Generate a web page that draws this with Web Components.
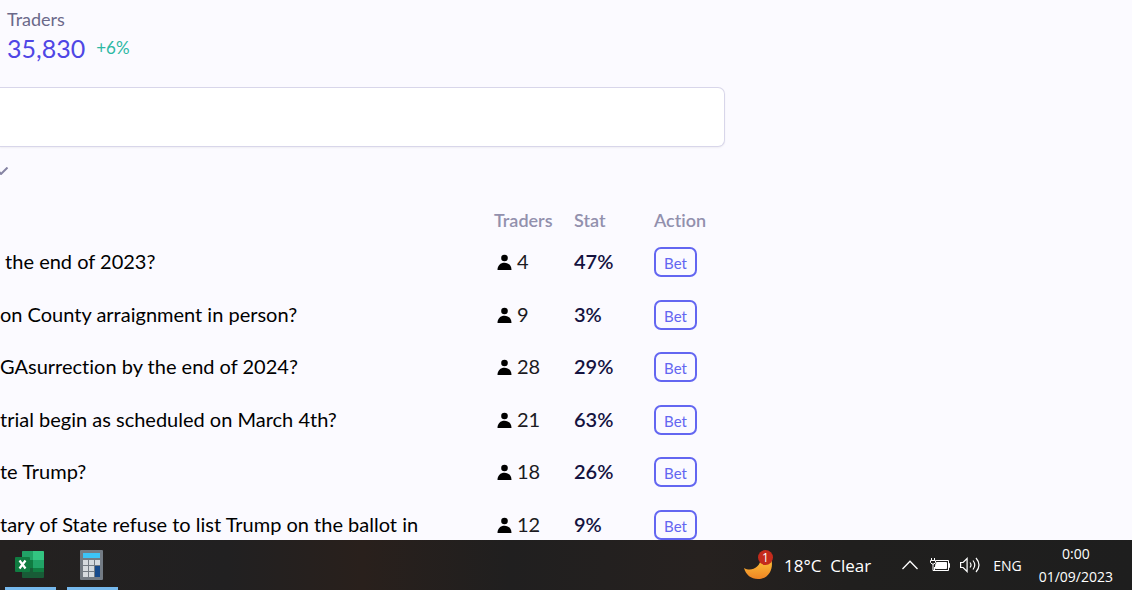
<!DOCTYPE html>
<html lang="en">
<head>
<meta charset="utf-8">
<title>Markets</title>
<style>
  body {
    margin: 0;
    height: 100vh;
    display: flex;
    flex-direction: column;
    background: #fbfaff;
    font-family: Lato, sans-serif;
    font-variant-ligatures: none;
  }
</style>
</head>
<body>
<market-page>
  <stat-tile label="Traders" value="35,830" change="+6%"></stat-tile>
  <search-box></search-box>
  <filter-toggle></filter-toggle>
  <market-table></market-table>
</market-page>
<task-bar>
  <task-app>
    <svg width="30" height="30" viewBox="0 0 30 30">
      <rect x="7" y="1" width="22" height="27" rx="1" fill="#185c37"/>
      <path d="M7 2a1 1 0 0 1 1-1h10v9H7z" fill="#21a366"/>
      <path d="M18 1h10a1 1 0 0 1 1 1v8H18z" fill="#33c481"/>
      <path d="M7 10h11v8H7z" fill="#107c41"/>
      <path d="M18 10h11v8H18z" fill="#21a366"/>
      <path d="M18 18h11v4H18z" fill="#107c41"/>
      <rect x="0" y="7" width="15" height="15" rx="1" fill="#107c41"/>
      <path d="M4.500 10.500l6 8M10.500 10.500l-6 8" stroke="#fff" stroke-width="2.200"/>
    </svg>
  </task-app>
  <task-app>
    <svg width="24" height="30" viewBox="0 0 24 30">
      <rect width="23" height="30" rx="1" fill="#737b84"/>
      <rect x="3" y="3" width="17" height="5" fill="#3cc4f7"/>
      <g fill="#d5dadf">
        <path d="M3 10h5v5H3zM9 10h5v5H9zM15 10h5v5h-5zM3 16h5v5H3zM9 16h5v5H9zM3 22h5v5H3zM9 22h5v5H9z"/>
      </g>
      <path d="M15 16h5v11h-5z" fill="#164a8c"/>
    </svg>
  </task-app>
  <weather-info slot="tray" count="1">18°C&nbsp; Clear</weather-info>
  <tray-icons slot="tray"></tray-icons>
  <tray-clock slot="tray" time="0:00" date="01/09/2023"></tray-clock>
</task-bar>

<script>
class MarketPage extends HTMLElement {
  constructor() {
    super();
    this.attachShadow({ mode: "open" }).innerHTML = `
      <style>
        :host {
          display: block;
          flex: 1;
          min-height: 0;
          overflow: hidden;
        }
        main {
          max-width: 725px;
          padding-top: 8px;
        }
      </style>
      <main><slot></slot></main>
    `;
  }
}
customElements.define("market-page", MarketPage);

class StatTile extends HTMLElement {
  connectedCallback() {
    this.attachShadow({ mode: "open" }).innerHTML = `
      <style>
        :host { display: block; padding-left: 7px; }
        .label { font-size: 18px; line-height: 22px; color: #6b698a; }
        .row { display: flex; align-items: center; gap: 11px; line-height: 36px; }
        .value { font-size: 25px; color: #4f46e5; }
        .change { font-size: 17px; color: #2bb8a3; }
      </style>
      <div class="label">${this.getAttribute("label")}</div>
      <div class="row">
        <span class="value">${this.getAttribute("value")}</span>
        <span class="change">${this.getAttribute("change")}</span>
      </div>
    `;
  }
}
customElements.define("stat-tile", StatTile);

class SearchBox extends HTMLElement {
  constructor() {
    super();
    this.attachShadow({ mode: "open" }).innerHTML = `
      <style>
        :host { display: block; margin-top: 21px; }
        input {
          display: block;
          box-sizing: border-box;
          width: 100%;
          height: 60px;
          padding: 0 16px;
          border: 1px solid #d8d6ea;
          border-left: 0;
          border-radius: 0 7px 7px 0;
          background: #fff;
          box-shadow: 0 1px 2px rgba(0, 0, 0, 0.05);
          font: inherit;
          font-size: 17px;
        }
      </style>
      <input type="text" aria-label="Search">
    `;
  }
}
customElements.define("search-box", SearchBox);

class FilterToggle extends HTMLElement {
  constructor() {
    super();
    this.attachShadow({ mode: "open" }).innerHTML = `
      <style>
        :host { display: flex; height: 57px; }
        button {
          height: 47px;
          margin-left: -5px;
          padding: 0;
          border: 0;
          background: none;
        }
        svg { display: block; }
      </style>
      <button type="button" aria-label="Filter">
        <svg width="14" height="8" viewBox="0 0 14 8" fill="none" stroke="#8583a3" stroke-width="2">
          <path d="M1 1l5 6L12.500 0.500"/>
        </svg>
      </button>
    `;
  }
}
customElements.define("filter-toggle", FilterToggle);

class TraderCount extends HTMLElement {
  constructor() {
    super();
    this.attachShadow({ mode: "open" }).innerHTML = `
      <style>
        :host {
          display: flex;
          align-items: center;
          gap: 5px;
          padding-left: 3px;
          color: #1c1b22;
        }
        span { padding-bottom: 2px; }
      </style>
      <svg width="15" height="16" viewBox="0 0 15 16">
        <circle cx="7.500" cy="4" r="3.300"/>
        <path d="M0.500 16c0-4.500 3-7.200 7-7.200s7 2.700 7 7.200z"/>
      </svg>
      <span><slot></slot></span>
    `;
  }
}
customElements.define("trader-count", TraderCount);

class BetButton extends HTMLElement {
  constructor() {
    super();
    this.attachShadow({ mode: "open" }).innerHTML = `
      <style>
        :host { display: block; }
        button {
          display: block;
          box-sizing: border-box;
          width: 43px;
          height: 30px;
          padding: 0 0 3px;
          border: 2px solid #6366f1;
          border-radius: 7px;
          background: none;
          color: #6366f1;
          font: inherit;
          font-size: 15px;
        }
      </style>
      <button type="button"><slot></slot></button>
    `;
  }
}
customElements.define("bet-button", BetButton);

const markets = [
  { question: "&nbsp;the end of 2023?", traders: 4, stat: "47%" },
  { question: "on County arraignment in person?", traders: 9, stat: "3%" },
  { question: "GAsurrection by the end of 2024?", traders: 28, stat: "29%" },
  { question: "trial begin as scheduled on March 4th?", traders: 21, stat: "63%" },
  { question: "te Trump?", traders: 18, stat: "26%" },
  { question: "tary of State refuse to list Trump on the ballot in", traders: 12, stat: "9%" },
];

class MarketTable extends HTMLElement {
  constructor() {
    super();
    const rows = markets.map((m) => `
      <tr>
        <td class="question">${m.question}</td>
        <td><trader-count>${m.traders}</trader-count></td>
        <td class="stat">${m.stat}</td>
        <td><bet-button>Bet</bet-button></td>
      </tr>
    `).join("");

    this.attachShadow({ mode: "open" }).innerHTML = `
      <style>
        :host { display: block; }
        table {
          width: 100%;
          table-layout: fixed;
          border-collapse: collapse;
          font-size: 20px;
          line-height: 28px;
        }
        th, td { padding: 0; text-align: left; white-space: nowrap; }
        th {
          height: 32px;
          font-size: 18px;
          font-weight: 600;
          color: #9290ad;
        }
        .narrow { width: 80px; }
        .last { width: 71px; }
        td { height: 53px; }
        tr:nth-child(odd) td { height: 52px; }
        tr .question, tr .stat { box-sizing: border-box; padding-bottom: 2px; }
        .question { color: #000; }
        .stat { font-weight: 600; color: #14123f; }
      </style>
      <table>
        <thead>
          <tr>
            <th></th>
            <th class="narrow">Traders</th>
            <th class="narrow">Stat</th>
            <th class="last">Action</th>
          </tr>
        </thead>
        <tbody>${rows}</tbody>
      </table>
    `;
  }
}
customElements.define("market-table", MarketTable);

class TaskBar extends HTMLElement {
  constructor() {
    super();
    this.attachShadow({ mode: "open" }).innerHTML = `
      <style>
        :host {
          display: flex;
          justify-content: space-between;
          height: 50px;
          background: linear-gradient(90deg, #242120, #212021 20%, #29201c 32%, #201f1f 45%, #26211f 62%, #201f1e 75%, #1e1e1e);
          color: #fff;
          font-family: "Open Sans", sans-serif;
        }
        .apps { display: flex; gap: 11px; padding-left: 5px; }
        .tray { display: flex; align-items: center; padding-right: 19px; }
      </style>
      <div class="apps"><slot></slot></div>
      <div class="tray"><slot name="tray"></slot></div>
    `;
  }
}
customElements.define("task-bar", TaskBar);

class TaskApp extends HTMLElement {
  constructor() {
    super();
    this.attachShadow({ mode: "open" }).innerHTML = `
      <style>
        :host { display: block; }
        div {
          display: flex;
          align-items: center;
          justify-content: center;
          box-sizing: border-box;
          width: 51px;
          height: 50px;
          padding: 3px 2px 0 0;
          border-bottom: 3px solid #76b9ed;
        }
      </style>
      <div><slot></slot></div>
    `;
  }
}
customElements.define("task-app", TaskApp);

class WeatherInfo extends HTMLElement {
  connectedCallback() {
    this.attachShadow({ mode: "open" }).innerHTML = `
      <style>
        :host {
          display: flex;
          align-items: center;
          gap: 11px;
          margin-right: 31px;
          font-size: 17px;
          white-space: nowrap;
        }
        .icon { display: grid; }
        .icon > * { grid-area: 1 / 1; }
        .badge {
          justify-self: end;
          width: 15px;
          height: 15px;
          border-radius: 50%;
          background: #c42b1c;
          font-size: 12px;
          line-height: 15px;
          text-align: center;
        }
      </style>
      <div class="icon">
        <svg width="29" height="30" viewBox="0 0 29 30">
          <defs>
            <linearGradient id="moon" x1="0" y1="0" x2="0" y2="1">
              <stop offset="0" stop-color="#fdc63c"/>
              <stop offset="1" stop-color="#ef8423"/>
            </linearGradient>
          </defs>
          <path d="M0 18c7 4 16 0 17-10h10c3 9-1 21-13 21C7 29 2 25 0 18z" fill="url(#moon)"/>
        </svg>
        <span class="badge">${this.getAttribute("count")}</span>
      </div>
      <span><slot></slot></span>
    `;
  }
}
customElements.define("weather-info", WeatherInfo);

class TrayIcons extends HTMLElement {
  constructor() {
    super();
    this.attachShadow({ mode: "open" }).innerHTML = `
      <style>
        :host {
          display: flex;
          align-items: center;
          margin-right: 17px;
          font-size: 14px;
        }
        svg { display: block; fill: none; stroke: #fff; }
        .up { margin-right: 12px; }
        .battery { margin-right: 9px; }
        .sound { margin-right: 12px; }
      </style>
      <svg class="up" width="16" height="10" viewBox="0 0 16 10" stroke-width="1.300">
        <path d="M0.500 9L8 1.200L15.500 9"/>
      </svg>
      <svg class="battery" width="21" height="16" viewBox="0 0 21 16">
        <path d="M6 3.500h12.500v10H4.500V10M18.500 6.500h1v4h-1"/>
        <path d="M6.500 5.500h10v6H5.500v-3z" fill="#fff"/>
        <path d="M1.500 1v2M4.500 1v2M0.500 3.500h5v2l-1.500 1.500h-2L0.500 5.500zM3 7v6.500h2"/>
      </svg>
      <svg class="sound" width="21" height="18" viewBox="0 0 21 18" stroke-width="1.200">
        <path d="M0.600 6.500h2.500l4-4v13l-4-4H0.600z"/>
        <path d="M10 6.500q2 2.500 0 5M13 4.500q3.500 4.500 0 9M16 2q6 7 0 14"/>
      </svg>
      <span>ENG</span>
    `;
  }
}
customElements.define("tray-icons", TrayIcons);

class TrayClock extends HTMLElement {
  connectedCallback() {
    this.attachShadow({ mode: "open" }).innerHTML = `
      <style>
        :host {
          display: block;
          font-size: 14px;
          line-height: 23px;
          text-align: center;
        }
      </style>
      <div>${this.getAttribute("time")}</div>
      <div>${this.getAttribute("date")}</div>
    `;
  }
}
customElements.define("tray-clock", TrayClock);
</script>
</body>
</html>
